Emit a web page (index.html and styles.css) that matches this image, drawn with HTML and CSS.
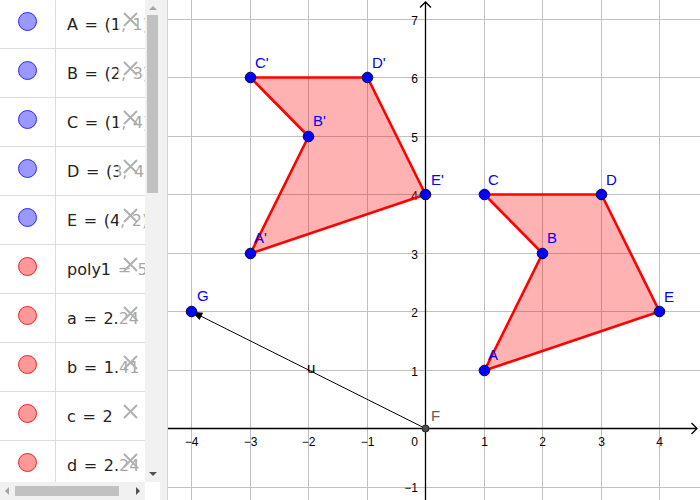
FILE: index.html
```html
<!DOCTYPE html>
<html>
<head>
<meta charset="utf-8">
<link rel="stylesheet" href="styles.css">
</head>
<body>
<div class="app">
  <aside class="algebra">
    <div class="algebra-main">
      <div class="items">
        <div class="item"><div class="marble-cell"><span class="marble blue"></span></div><div class="formula">A = (1, 1)</div><div class="delete"><svg width="15" height="15" viewBox="0 0 15 15"><path d="M1 1L14 14M14 1L1 14"/></svg></div></div>
        <div class="item"><div class="marble-cell"><span class="marble blue"></span></div><div class="formula">B = (2, 3)</div><div class="delete"><svg width="15" height="15" viewBox="0 0 15 15"><path d="M1 1L14 14M14 1L1 14"/></svg></div></div>
        <div class="item"><div class="marble-cell"><span class="marble blue"></span></div><div class="formula">C = (1, 4)</div><div class="delete"><svg width="15" height="15" viewBox="0 0 15 15"><path d="M1 1L14 14M14 1L1 14"/></svg></div></div>
        <div class="item"><div class="marble-cell"><span class="marble blue"></span></div><div class="formula">D = (3, 4)</div><div class="delete"><svg width="15" height="15" viewBox="0 0 15 15"><path d="M1 1L14 14M14 1L1 14"/></svg></div></div>
        <div class="item"><div class="marble-cell"><span class="marble blue"></span></div><div class="formula">E = (4, 2)</div><div class="delete"><svg width="15" height="15" viewBox="0 0 15 15"><path d="M1 1L14 14M14 1L1 14"/></svg></div></div>
        <div class="item"><div class="marble-cell"><span class="marble red"></span></div><div class="formula">poly1 = 5</div><div class="delete"><svg width="15" height="15" viewBox="0 0 15 15"><path d="M1 1L14 14M14 1L1 14"/></svg></div></div>
        <div class="item"><div class="marble-cell"><span class="marble red"></span></div><div class="formula">a = 2.24</div><div class="delete"><svg width="15" height="15" viewBox="0 0 15 15"><path d="M1 1L14 14M14 1L1 14"/></svg></div></div>
        <div class="item"><div class="marble-cell"><span class="marble red"></span></div><div class="formula">b = 1.41</div><div class="delete"><svg width="15" height="15" viewBox="0 0 15 15"><path d="M1 1L14 14M14 1L1 14"/></svg></div></div>
        <div class="item"><div class="marble-cell"><span class="marble red"></span></div><div class="formula">c = 2</div><div class="delete"><svg width="15" height="15" viewBox="0 0 15 15"><path d="M1 1L14 14M14 1L1 14"/></svg></div></div>
        <div class="item"><div class="marble-cell"><span class="marble red"></span></div><div class="formula">d = 2.24</div><div class="delete"><svg width="15" height="15" viewBox="0 0 15 15"><path d="M1 1L14 14M14 1L1 14"/></svg></div></div>
      </div>
      <div class="vscroll">
        <span class="arrow up"></span>
        <div class="vthumb"></div>
        <span class="arrow down"></span>
      </div>
    </div>
    <div class="hbar">
      <div class="hscroll">
        <span class="arrow left"></span>
        <div class="hthumb"></div>
        <span class="arrow right"></span>
      </div>
      <div class="corner"></div>
    </div>
  </aside>
  <div class="splitter"></div>
  <main class="graphics">
    <svg class="canvas" width="532" height="500" viewBox="168 0 532 500">
      <g class="grid">
        <path d="M191.5 0V500M250.5 0V500M308.5 0V500M367.5 0V500M484.5 0V500M542.5 0V500M601.5 0V500M659.5 0V500"/>
        <path d="M168 19.5H700M168 77.5H700M168 136.5H700M168 194.5H700M168 253.5H700M168 311.5H700M168 370.5H700M168 487.5H700"/>
      </g>
      <g class="axes">
        <path d="M168 428.5H697M425.5 500V2"/>
        <path class="chev" d="M691.5 423L697 428.5L691.5 434M420 7.5L425.5 2L431 7.5"/>
      </g>
      <g class="ticks-x">
        <text x="191.5" y="446">−4</text>
        <text x="250.5" y="446">−3</text>
        <text x="308.5" y="446">−2</text>
        <text x="367.5" y="446">−1</text>
        <text x="414.5" y="446">0</text>
        <text x="484.5" y="446">1</text>
        <text x="542.5" y="446">2</text>
        <text x="601.5" y="446">3</text>
        <text x="659.5" y="446">4</text>
      </g>
      <g class="ticks-y">
        <text x="418" y="25">7</text>
        <text x="418" y="83">6</text>
        <text x="418" y="142">5</text>
        <text x="418" y="200">4</text>
        <text x="418" y="259">3</text>
        <text x="418" y="317">2</text>
        <text x="418" y="376">1</text>
        <text x="418" y="492">−1</text>
      </g>
      <polygon class="poly" points="484.5,370.5 542.5,253.5 484.5,194.5 601.5,194.5 659.5,311.5"/>
      <polygon class="poly" points="250.5,253.5 308.5,136.5 250.5,77.5 367.5,77.5 425.5,194.5"/>
      <line class="vec" x1="425.5" y1="428.5" x2="199" y2="315.2"/>
      <polygon class="vec-head" points="191.5,311.5 203.1,312.8 199.5,320"/>
      <g class="pts">
        <circle cx="484.5" cy="370.5" r="5.3"/>
        <circle cx="542.5" cy="253.5" r="5.3"/>
        <circle cx="484.5" cy="194.5" r="5.3"/>
        <circle cx="601.5" cy="194.5" r="5.3"/>
        <circle cx="659.5" cy="311.5" r="5.3"/>
        <circle cx="250.5" cy="253.5" r="5.3"/>
        <circle cx="308.5" cy="136.5" r="5.3"/>
        <circle cx="250.5" cy="77.5" r="5.3"/>
        <circle cx="367.5" cy="77.5" r="5.3"/>
        <circle cx="425.5" cy="194.5" r="5.3"/>
        <circle cx="191.5" cy="311.5" r="5.3"/>
      </g>
      <circle class="pt-f" cx="425.5" cy="428.5" r="3.5"/>
      <g class="labels">
        <text x="255" y="68">C'</text>
        <text x="372" y="68">D'</text>
        <text x="313" y="126">B'</text>
        <text x="431" y="185">E'</text>
        <text x="254" y="243">A'</text>
        <text x="488" y="185">C</text>
        <text x="606" y="185">D</text>
        <text x="547" y="243">B</text>
        <text x="664" y="302">E</text>
        <text x="488" y="360">A</text>
        <text x="197" y="301">G</text>
      </g>
      <text class="label-f" x="431" y="421">F</text>
      <text class="label-u" x="307" y="373">u</text>
    </svg>
  </main>
</div>
</body>
</html>
```
FILE: styles.css
```css
html, body {
  margin: 0;
  padding: 0;
  background: #fff;
}
.app {
  width: 700px;
  height: 500px;
  display: flex;
  overflow: hidden;
  font-family: "DejaVu Sans", "Liberation Sans", sans-serif;
}
.algebra {
  width: 160px;
  display: flex;
  flex-direction: column;
  flex: none;
}
.algebra-main {
  height: 482px;
  display: flex;
}
.items {
  width: 145px;
  overflow: hidden;
}
.item {
  position: relative;
  display: flex;
  height: 48px;
  border-bottom: 1px solid #dcdcdc;
}
.marble-cell {
  width: 56px;
  flex: none;
  box-sizing: border-box;
  border-right: 1px solid #dcdcdc;
  display: flex;
  justify-content: center;
  align-items: flex-start;
  padding-top: 12px;
}
.marble {
  width: 19px;
  height: 19px;
  border-radius: 50%;
  box-sizing: border-box;
  border: 1px solid;
}
.marble.blue {
  background: #9999ff;
  border-color: #2a2aff;
}
.marble.red {
  background: #ff9999;
  border-color: #ee2222;
}
.formula {
  padding: 15px 0 0 11px;
  font-size: 16px;
  line-height: 20px;
  word-spacing: 1.5px;
  color: #222;
  white-space: nowrap;
}
.delete {
  position: absolute;
  left: 118px;
  top: 0;
  width: 40px;
  height: 48px;
  background: rgba(255, 255, 255, 0.6);
}
.delete svg {
  display: block;
  margin: 12px 0 0 5px;
}
.delete path {
  stroke: #b0b0b0;
  stroke-width: 2;
  fill: none;
}
.vscroll {
  width: 15px;
  flex: none;
  box-sizing: border-box;
  background: #f1f1f1;
  display: flex;
  flex-direction: column;
  align-items: center;
  padding: 6px 0 6px 0;
}
.vthumb {
  width: 11px;
  height: 178px;
  margin-top: 5px;
  background: #c1c1c1;
}
.arrow {
  display: block;
  width: 0;
  height: 0;
}
.arrow.up {
  border-left: 4px solid transparent;
  border-right: 4px solid transparent;
  border-bottom: 4px solid #a3a3a3;
}
.arrow.down {
  margin-top: auto;
  border-left: 4px solid transparent;
  border-right: 4px solid transparent;
  border-top: 4px solid #505050;
}
.hbar {
  height: 18px;
  display: flex;
}
.hscroll {
  width: 145px;
  box-sizing: border-box;
  background: #f1f1f1;
  display: flex;
  align-items: center;
  padding: 0 5px 0 5px;
}
.hthumb {
  width: 104px;
  height: 10px;
  margin-left: 6px;
  background: #c1c1c1;
}
.arrow.left {
  border-top: 4px solid transparent;
  border-bottom: 4px solid transparent;
  border-right: 4px solid #a3a3a3;
}
.arrow.right {
  margin-left: auto;
  border-top: 4px solid transparent;
  border-bottom: 4px solid transparent;
  border-left: 4px solid #505050;
}
.corner {
  width: 15px;
  background: #fff;
}
.splitter {
  width: 8px;
  flex: none;
  box-sizing: border-box;
  background: #f0f0f0;
  border-right: 1px solid #d4d4d4;
}
.graphics {
  flex: 1;
  overflow: hidden;
}
.canvas {
  display: block;
}
.grid path {
  stroke: #c0c0c0;
  stroke-width: 1;
  fill: none;
}
.axes path {
  stroke: #000;
  stroke-width: 1.3;
  fill: none;
}
.ticks-x text, .ticks-y text {
  font-family: "Liberation Sans", Arial, sans-serif;
  font-size: 12px;
  fill: #000;
}
.ticks-x text {
  text-anchor: middle;
}
.ticks-y text {
  text-anchor: end;
}
.poly {
  fill: #ff0000;
  fill-opacity: 0.3;
  stroke: #ff0000;
  stroke-width: 2.6;
  stroke-linejoin: round;
}
.vec {
  stroke: #000;
  stroke-width: 1;
}
.vec-head {
  fill: #000;
}
.pts circle {
  fill: #0000ff;
  stroke: #00003a;
  stroke-width: 1;
}
.pt-f {
  fill: #4d4d4d;
  stroke: #222;
  stroke-width: 1;
}
.labels text, .label-f, .label-u {
  font-family: "Liberation Sans", Arial, sans-serif;
  font-size: 15px;
}
.labels text {
  fill: #0000ff;
}
.label-f {
  fill: #606060;
}
.label-u {
  fill: #000;
}
```
